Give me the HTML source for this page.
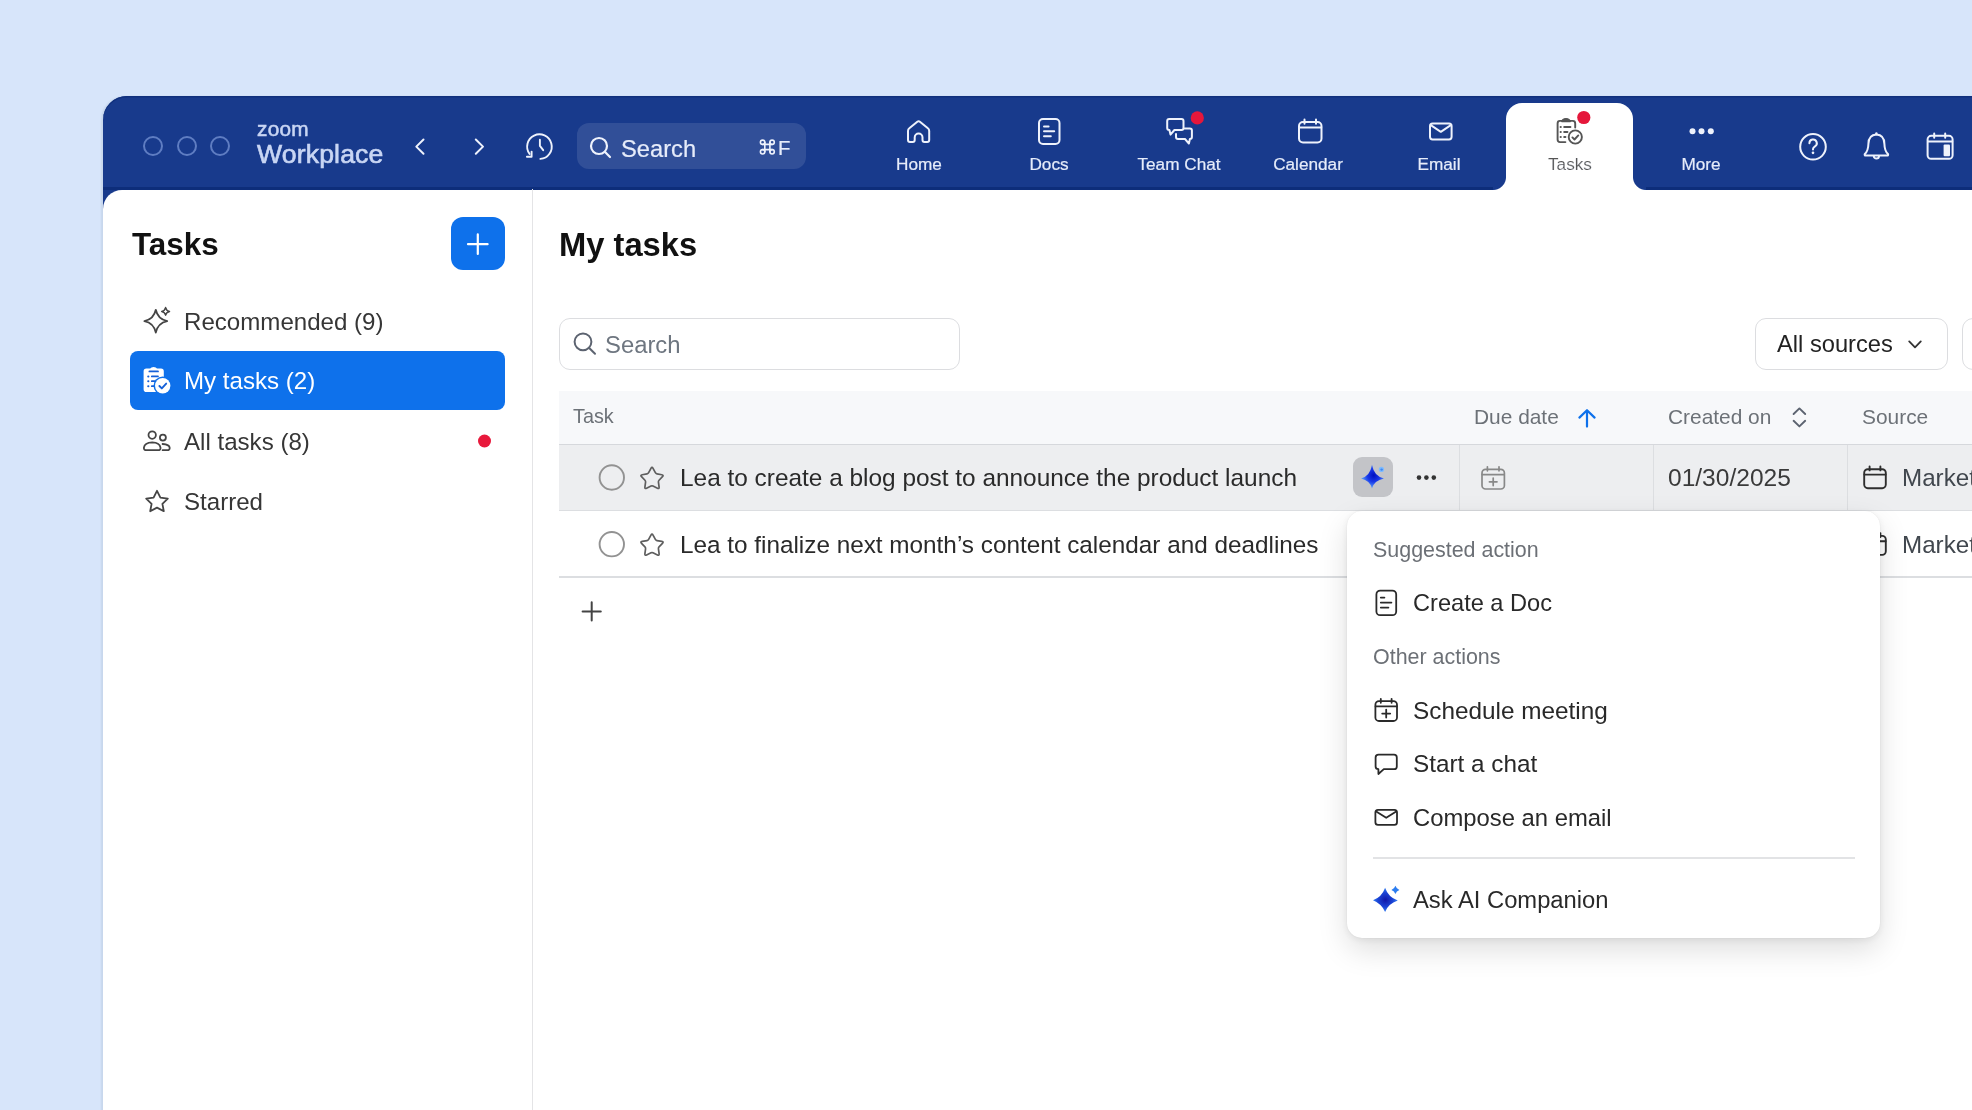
<!DOCTYPE html>
<html><head><meta charset="utf-8">
<style>
*{box-sizing:border-box;margin:0;padding:0}
html,body{width:1972px;height:1110px;overflow:hidden}
body{position:relative;background:#D7E5FA;font-family:"Liberation Sans",sans-serif;-webkit-font-smoothing:antialiased;}
.a{position:absolute}
.t{position:absolute;white-space:nowrap;line-height:normal;will-change:transform}
svg{position:absolute;overflow:visible}
#hdr{left:103px;top:96px;width:1900px;height:1030px;background:#183A8C;border-top-left-radius:24px;box-shadow:inset 0 1.5px 0 #10307D,-1.5px 0 1.5px rgba(70,95,130,0.10)}
#hline{left:103px;top:187px;width:1900px;height:3px;background:#0D2D7A}
#panel{left:103px;top:190px;width:1900px;height:930px;background:#fff;border-top-left-radius:19px;}
#tab{left:1506px;top:103px;width:127px;height:88px;background:#fff;border-radius:16px 16px 0 0}
.flare{width:13px;height:13px;top:177px}
#divider{left:532px;top:189px;width:1px;height:921px;background:#E4E4E6}
.tl{width:20px;height:20px;border:2px solid #5F7DC2;border-radius:50%;top:136px}
.nav{color:#E6ECFA;font-size:17.2px;-webkit-text-stroke:0.2px #E6ECFA}
.side{left:183.8px;font-size:24.1px;color:#363636}
.th{top:404.8px;font-size:20.5px;color:#6C7177}
.row{left:679.5px;font-size:24.2px;color:#2A2A2A}
.pl{font-size:21.45px;color:#6C7076}
.pi{left:1413px;font-size:23.7px;color:#292929}
</style></head><body>
<div class="a" id="hdr"></div>
<div class="a" id="hline"></div>
<div class="a" id="panel"></div>
<div class="a" id="tab"></div>
<div class="a flare" style="left:1493px;background:radial-gradient(circle at 0 0,#183A8C 12.5px,#fff 13.5px)"></div>
<div class="a flare" style="left:1633px;background:radial-gradient(circle at 13px 0,#183A8C 12.5px,#fff 13.5px)"></div>
<div class="a" id="divider"></div>


<!-- SIDEBAR -->
<div class="t" style="left:131.5px;top:226.9px;font-size:31.4px;font-weight:bold;color:#111">Tasks</div>
<div class="a" style="left:451px;top:216.5px;width:54px;height:53.5px;border-radius:12px;background:#0E71EB"></div>
<svg class="a" style="left:0;top:0" width="1972" height="1110" fill="none" stroke="#fff" stroke-width="2.2" stroke-linecap="round"><path d="M468,244.2 H487.6 M477.8,234.4 V254"/></svg>
<div class="a" style="left:130.4px;top:350.7px;width:374.6px;height:59.6px;border-radius:8px;background:#0E71EB"></div>
<div class="t side" style="top:307.5px">Recommended (9)</div>
<div class="t side" style="top:367.2px;color:#fff">My tasks (2)</div>
<div class="t side" style="top:428.2px">All tasks (8)</div>
<div class="t side" style="top:487.9px">Starred</div>
<svg class="a" style="left:0;top:0" width="1972" height="1110"><circle cx="484.5" cy="441" r="6.5" fill="#E8193C"/></svg>
<svg class="a" style="left:0;top:0" width="1972" height="1110" fill="none" stroke="#454545" stroke-width="1.8" stroke-linecap="round" stroke-linejoin="round">
 <!-- sparkle -->
 <path d="M155.8,309.8 Q157.8,319.2 167.2,321.1 Q157.8,323 155.8,332.6 Q153.8,323 144.4,321.1 Q153.8,319.2 155.8,309.8 Z"/>
 <path d="M165.6,307.6 Q166.3,310.7 169.5,311.4 Q166.3,312.1 165.6,315.2 Q164.9,312.1 161.7,311.4 Q164.9,310.7 165.6,307.6 Z" stroke-width="1.5"/>
 <!-- people -->
 <circle cx="152.2" cy="435.1" r="3.7"/>
 <path d="M146.6,450.2 H158 Q160.8,450.2 160.5,447.6 Q159.8,442.5 152.2,442.3 Q144.6,442.5 143.9,447.6 Q143.6,450.2 146.6,450.2 Z"/>
 <circle cx="162.9" cy="437.6" r="3"/>
 <path d="M162.6,444 Q169.4,444.4 169.7,447.8 Q169.8,450.2 167.2,450.2 H162.6"/>
 <!-- star -->
 <path d="M157,490.8 L160.4,497.6 L167.8,498.6 L162.4,503.8 L163.8,511.2 L157,507.6 L150.2,511.2 L151.6,503.8 L146.2,498.6 L153.6,497.6 Z"/>
</svg>
<!-- my tasks icon (white filled) -->
<svg class="a" style="left:0;top:0" width="1972" height="1110">
 <path d="M143.6,371.4 Q143.6,368.6 146.4,368.6 H150.2 Q151,367 153.6,367 Q156.2,367 157,368.6 H161 Q163.8,368.6 163.8,371.4 V389.2 Q163.8,392 161,392 H146.4 Q143.6,392 143.6,389.2 Z" fill="#fff"/>
 <path d="M149.4,371.4 H158" stroke="#1560D8" stroke-width="1.8" stroke-linecap="round"/>
 <path d="M148.2,376.4 H148.4 M148.2,381.2 H148.4 M148.2,386.2 H148.4" stroke="#1560D8" stroke-width="2" stroke-linecap="round"/>
 <path d="M151.8,376.4 H158 M151.8,381.2 H156 M151.8,386.2 H154" stroke="#1560D8" stroke-width="1.7" stroke-linecap="round"/>
 <circle cx="162.7" cy="385.8" r="9.2" fill="#0E71EB"/>
 <circle cx="162.7" cy="385.8" r="7.7" fill="#fff"/>
 <path d="M159.4,386 L161.8,388.4 L166.2,383.6" fill="none" stroke="#1560D8" stroke-width="1.9" stroke-linecap="round" stroke-linejoin="round"/>
</svg>

<!-- MAIN -->
<div class="t" style="left:559px;top:225.8px;font-size:32.7px;font-weight:bold;color:#111">My tasks</div>
<div class="a" style="left:559px;top:318px;width:400.5px;height:52px;border:1.5px solid #DCDDE0;border-radius:11px"></div>
<svg class="a" style="left:0;top:0" width="1972" height="1110" fill="none" stroke="#5C6370" stroke-width="2" stroke-linecap="round"><circle cx="583" cy="341.8" r="8.4"/><path d="M589.2,348 L595,353.8"/></svg>
<div class="t" style="left:605px;top:331.3px;font-size:23.85px;color:#6E7680">Search</div>
<div class="a" style="left:1755px;top:317.5px;width:192.5px;height:52.5px;border:1.5px solid #DCDDE0;border-radius:11px"></div>
<div class="a" style="left:1962px;top:317.5px;width:192.5px;height:52.5px;border:1.5px solid #DCDDE0;border-radius:11px"></div>
<div class="t" style="left:1776.5px;top:331.2px;font-size:23.7px;color:#222">All sources</div>
<svg class="a" style="left:0;top:0" width="1972" height="1110" fill="none" stroke="#333" stroke-width="1.8" stroke-linecap="round" stroke-linejoin="round"><path d="M1909.2,341.4 L1915,347.4 L1920.8,341.4"/></svg>

<!-- table -->
<div class="a" style="left:559px;top:390.5px;width:1500px;height:54.5px;background:#F7F8FA;border-bottom:1.5px solid #D6D8DC"></div>
<div class="a" style="left:559px;top:445px;width:1500px;height:65.5px;background:#EDEEF0;border-bottom:1.2px solid #DCDEE1"></div>
<div class="a" style="left:559px;top:576.4px;width:1500px;height:1.4px;background:#DCDEE1"></div>
<div class="a" style="left:1458.8px;top:445px;width:1px;height:65px;background:#DCDEE1"></div>
<div class="a" style="left:1652.8px;top:445px;width:1px;height:65px;background:#DCDEE1"></div>
<div class="a" style="left:1846.8px;top:445px;width:1px;height:65px;background:#DCDEE1"></div>
<div class="t th" style="left:573.2px;font-size:19.8px;top:405.4px">Task</div>
<div class="t th" style="left:1473.5px;font-size:20.9px">Due date</div>
<div class="t th" style="left:1668px;font-size:20.9px">Created on</div>
<div class="t th" style="left:1861.5px;font-size:20.9px">Source</div>
<svg class="a" style="left:0;top:0" width="1972" height="1110" fill="none" stroke="#0E71EB" stroke-width="2.2" stroke-linecap="round" stroke-linejoin="round"><path d="M1587,410.5 V426.6 M1579.4,417.6 L1587,410.2 L1594.6,417.6"/></svg>
<svg class="a" style="left:0;top:0" width="1972" height="1110" fill="none" stroke="#5C6370" stroke-width="1.9" stroke-linecap="round" stroke-linejoin="round"><path d="M1793.6,414 L1799.4,408.4 L1805.2,414 M1793.6,420.8 L1799.4,426.4 L1805.2,420.8"/></svg>

<svg class="a" style="left:0;top:0" width="1972" height="1110" fill="none" stroke="#929292" stroke-width="1.9" stroke-linecap="round" stroke-linejoin="round">
 <circle cx="611.8" cy="477.5" r="12.2"/>
 <circle cx="611.8" cy="544.2" r="12.2"/>
</svg>
<svg class="a" style="left:0;top:0" width="1972" height="1110" fill="none" stroke="#5E5E5E" stroke-width="1.7" stroke-linecap="round" stroke-linejoin="round">
 <path id="st1" d="M650.96,468.34 Q652.00,466.40 653.04,468.34 L655.36,472.69 Q655.88,473.66 656.96,473.85 L661.82,474.72 Q663.98,475.11 662.46,476.69 L659.04,480.25 Q658.28,481.04 658.43,482.13 L659.10,487.01 Q659.41,489.19 657.43,488.23 L652.99,486.08 Q652.00,485.60 651.01,486.08 L646.57,488.23 Q644.59,489.19 644.90,487.01 L645.57,482.13 Q645.72,481.04 644.96,480.25 L641.54,476.69 Q640.02,475.11 642.18,474.72 L647.04,473.85 Q648.12,473.66 648.64,472.69 Z"/>
 <path d="M650.96,535.04 Q652.00,533.10 653.04,535.04 L655.36,539.39 Q655.88,540.36 656.96,540.55 L661.82,541.42 Q663.98,541.81 662.46,543.39 L659.04,546.95 Q658.28,547.74 658.43,548.83 L659.10,553.71 Q659.41,555.89 657.43,554.93 L652.99,552.78 Q652.00,552.30 651.01,552.78 L646.57,554.93 Q644.59,555.89 644.90,553.71 L645.57,548.83 Q645.72,547.74 644.96,546.95 L641.54,543.39 Q640.02,541.81 642.18,541.42 L647.04,540.55 Q648.12,540.36 648.64,539.39 Z"/>
</svg>
<div class="t row" style="top:463.8px;font-size:24.4px">Lea to create a blog post to announce the product launch</div>
<div class="t row" style="top:530.7px;font-size:24.3px">Lea to finalize next month’s content calendar and deadlines</div>
<div class="a" style="left:1353px;top:457.4px;width:40px;height:40px;border-radius:9px;background:#C3C4C8"></div>
<svg class="a" style="left:0;top:0" width="1972" height="1110">
 <defs><radialGradient id="sg" cx="0.55" cy="0.45" r="0.6"><stop offset="0" stop-color="#0010C0"/><stop offset="0.45" stop-color="#1838E8"/><stop offset="1" stop-color="#6AB4FF"/></radialGradient>
 <radialGradient id="sg2" cx="0.5" cy="0.5" r="0.55"><stop offset="0" stop-color="#1016A8"/><stop offset="0.55" stop-color="#1B45D6"/><stop offset="1" stop-color="#3C8EF8"/></radialGradient></defs>
 <path d="M1372,464.8 Q1374,476.4 1384,478.4 Q1374,480.4 1372,488.4 Q1370,480.4 1361,478.4 Q1370,476.4 1372,464.8 Z" fill="url(#sg)"/>
 <circle cx="1381.4" cy="469.4" r="2.6" fill="#7DBBFF"/><circle cx="1381.6" cy="469.6" r="1.2" fill="#3F86F0"/>
 <circle cx="1419" cy="477.6" r="2.3" fill="#333"/>
 <circle cx="1426.4" cy="477.6" r="2.3" fill="#333"/>
 <circle cx="1433.8" cy="477.6" r="2.3" fill="#333"/>
</svg>
<svg class="a" style="left:0;top:0" width="1972" height="1110" fill="none" stroke="#888" stroke-width="1.7" stroke-linecap="round" stroke-linejoin="round">
 <rect x="1482" y="469.4" width="22.4" height="19.6" rx="3.6"/>
 <path d="M1482.2,474.6 H1504.2 M1487.4,466.8 V470.8 M1499,466.8 V470.8 M1493.2,478 V485.6 M1489.4,481.8 H1497"/>
</svg>
<div class="t row" style="left:1668.3px;top:464.4px;font-size:24.55px;color:#3A3A3A">01/30/2025</div>
<svg class="a" style="left:0;top:0" width="1972" height="1110" fill="none" stroke="#2E2E2E" stroke-width="1.9" stroke-linecap="round" stroke-linejoin="round">
 <rect x="1864.2" y="469.2" width="21.6" height="19" rx="3.6"/>
 <path d="M1864.4,474.6 H1885.6 M1869.6,466.4 V470.4 M1880.4,466.4 V470.4"/>
 <rect x="1864.2" y="535.9" width="21.6" height="19" rx="3.6"/>
 <path d="M1864.4,541.3 H1885.6 M1869.6,533.1 V537.1 M1880.4,533.1 V537.1"/>
</svg>
<div class="t row" style="left:1901.5px;top:464.3px;color:#41474E">Marketing</div>
<div class="t row" style="left:1901.5px;top:531.2px;color:#41474E">Marketing</div>
<svg class="a" style="left:0;top:0" width="1972" height="1110" fill="none" stroke="#444" stroke-width="2" stroke-linecap="round"><path d="M582.6,611.4 H600.8 M591.7,602.3 V620.5"/></svg>

<!-- POPUP -->
<div class="a" style="left:1346.5px;top:510.5px;width:533.8px;height:427.6px;border-radius:15px;background:#fff;box-shadow:0 12px 30px rgba(0,0,0,0.13),0 2px 8px rgba(0,0,0,0.07),0 0 1.5px rgba(0,0,0,0.10)"></div>
<div class="t pl" style="left:1373.2px;top:537.6px">Suggested action</div>
<div class="t pi" style="top:589.8px;font-size:23.6px">Create a Doc</div>
<div class="t pl" style="left:1373.2px;top:644.8px">Other actions</div>
<div class="t pi" style="top:696.8px;font-size:24.33px">Schedule meeting</div>
<div class="t pi" style="top:750.4px;font-size:24.3px">Start a chat</div>
<div class="t pi" style="top:803.9px;font-size:23.83px">Compose an email</div>
<div class="a" style="left:1373px;top:857.4px;width:482px;height:1.5px;background:#E2E3E5"></div>
<div class="t pi" style="top:885.9px;font-size:23.78px">Ask AI Companion</div>
<svg class="a" style="left:0;top:0" width="1972" height="1110" fill="none" stroke="#2A2A2A" stroke-width="1.8" stroke-linecap="round" stroke-linejoin="round">
 <rect x="1376.4" y="590.6" width="19.8" height="24.6" rx="3.8"/>
 <path d="M1380.8,597.6 H1384.4 M1380.8,602.6 H1391.4 M1380.8,607.6 H1388.4"/>
 <rect x="1375.4" y="701.2" width="21.6" height="19.8" rx="3.6"/>
 <path d="M1375.6,706.4 H1396.8 M1380.8,698.8 V702.8 M1391.6,698.8 V702.8 M1386.2,709.6 V717.6 M1382.2,713.6 H1390.2"/>
 <path d="M1378.6,754.6 H1394 Q1396.8,754.6 1396.8,757.4 V766.4 Q1396.8,769.2 1394,769.2 H1383.8 L1378.4,774 V769.2 Q1375.6,769 1375.6,766.4 V757.4 Q1375.6,754.6 1378.6,754.6 Z"/>
 <rect x="1375.4" y="809.8" width="21.6" height="15" rx="2.6"/>
 <path d="M1376.2,811.4 L1386.2,817.8 L1396.2,811.4"/>
</svg>
<svg class="a" style="left:0;top:0" width="1972" height="1110">
 <path d="M1385.1,887.8 Q1388.2,897.2 1397.8,900.6 Q1388.2,903.8 1385.1,912 Q1381.8,903.8 1373,900.2 Q1381.8,897.2 1385.1,887.8 Z" fill="url(#sg2)"/>
 <path d="M1395.4,885.8 Q1396.4,888.9 1399.4,889.9 Q1396.4,890.9 1395.4,894 Q1394.4,890.9 1391.4,889.9 Q1394.4,888.9 1395.4,885.8 Z" fill="#2C7DF0"/>
</svg>

<!-- traffic lights -->
<div class="a tl" style="left:143px"></div>
<div class="a tl" style="left:177px"></div>
<div class="a tl" style="left:210px"></div>

<!-- logo -->
<div class="t" style="left:256.8px;top:116.6px;font-size:20.8px;color:#C9D6F4;-webkit-text-stroke:0.55px #C9D6F4;letter-spacing:0.25px">zoom</div>
<div class="t" style="left:257px;top:138.8px;font-size:26.6px;color:#C9D6F4;-webkit-text-stroke:0.65px #C9D6F4;letter-spacing:0.15px">Workplace</div>


<!-- header icons -->
<svg class="a" style="left:0;top:0" width="1972" height="1110" fill="none" stroke="#EEF2FC" stroke-width="2" stroke-linecap="round" stroke-linejoin="round">
 <path d="M423.5,139.5 L416.3,146.6 L423.5,153.8"/>
 <path d="M475.8,139.5 L483,146.6 L475.8,153.8"/>
 <path d="M529.6,154 A12.3,12.3 0 1 1 540.4,158.9" stroke-width="1.9"/>
 <path d="M526.9,156.8 L531.6,156.8 L531.6,151.6" stroke-width="1.9"/>
 <path d="M539.9,139.8 L539.9,145.9 L543.2,150.2" stroke-width="1.9"/>
 <circle cx="599" cy="146" r="8" stroke-width="2.2"/>
 <path d="M604.8,151.8 L610,157" stroke-width="2.2"/>
 <!-- home -->
 <path d="M908,131 Q908,129.3 909.3,128.3 L917.3,121.8 Q918.6,120.8 919.9,121.8 L927.9,128.3 Q929.2,129.3 929.2,131 L929.2,140 Q929.2,142 927.2,142 L924.5,142 Q922.5,142 922.5,140 L922.5,137.5 A3.9,3.9 0 0 0 914.7,137.5 L914.7,140 Q914.7,142 912.7,142 L910,142 Q908,142 908,140 Z"/>
 <!-- docs -->
 <rect x="1039" y="119" width="20.5" height="25" rx="4"/>
 <path d="M1044,126.4 H1048.6 M1044,131.2 H1054.2 M1044,136.2 H1050.8"/>
 <!-- chat -->
 <path d="M1169.4,130 H1169.2 Q1167.2,130 1167.2,128 V121 Q1167.2,119.1 1169.2,119.1 H1181.5 Q1183.5,119.1 1183.5,121 V128 Q1183.5,130 1181.5,130 H1174.4 L1170.5,134.6 Z"/>
 <path d="M1184.6,128.6 H1189.9 Q1191.9,128.6 1191.9,130.6 V137 Q1191.9,139 1189.9,139 L1188.9,143.6 L1185,139 H1178 Q1176,139 1176,137 V134"/>
 <!-- calendar -->
 <rect x="1299" y="122" width="22.5" height="20.5" rx="4"/>
 <path d="M1299.3,127.6 H1321.2 M1304.5,119.6 V123.8 M1316,119.6 V123.8"/>
 <!-- email -->
 <rect x="1430" y="123.6" width="21.6" height="15.8" rx="2.6"/>
 <path d="M1430.8,125.2 L1440.8,131.8 L1450.8,125.2"/>
 <!-- help -->
 <circle cx="1813" cy="146.8" r="12.8"/>
 <path d="M1809.4,143.2 A3.7,3.7 0 1 1 1815,146.3 Q1813,147.5 1813,149 V149.6" stroke-width="2"/>
 <!-- bell -->
 <path d="M1876.4,134.6 Q1868.6,135 1868.4,144 Q1868.2,151 1864.8,154 Q1864.2,155.4 1865.8,155.6 H1887 Q1888.6,155.4 1888,154 Q1884.6,151 1884.4,144 Q1884.2,135 1876.4,134.6 Z"/>
 <path d="M1873.8,156 A2.6,2.6 0 0 0 1879,156"/>
 <!-- calendar right -->
 <rect x="1927.6" y="135.8" width="25" height="23" rx="3.6"/>
 <path d="M1928,141.4 H1952.2 M1934.2,133.4 V137.8 M1945.2,133.4 V137.8"/>
</svg>
<svg class="a" style="left:0;top:0" width="1972" height="1110">
 <circle cx="1813" cy="152.8" r="1.35" fill="#EEF2FC"/>
 <circle cx="1876.4" cy="133.4" r="1.2" fill="#EEF2FC"/>
 <rect x="1943.6" y="144.6" width="6.4" height="11.6" rx="1" fill="#EEF2FC"/>
 <circle cx="1692.5" cy="131.2" r="3" fill="#EEF2FC"/>
 <circle cx="1701.5" cy="131.2" r="3" fill="#EEF2FC"/>
 <circle cx="1710.8" cy="131.2" r="3" fill="#EEF2FC"/>
 <circle cx="1197.3" cy="117.9" r="6.6" fill="#E5173B"/>
 <circle cx="1583.8" cy="117.5" r="6.6" fill="#E5173B"/>
</svg>
<!-- tasks icon (grey) -->
<svg class="a" style="left:0;top:0" width="1972" height="1110" fill="none" stroke="#555" stroke-width="1.9" stroke-linecap="round" stroke-linejoin="round">
 <path d="M1575.2,127.6 V123.4 Q1575.2,120.9 1572.8,120.9 H1559.8 Q1557.6,120.9 1557.6,123.4 V139.6 Q1557.6,142.1 1560,142.1 H1565.4"/>
 <path d="M1561.8,121.6 Q1562.4,118.6 1566,118.6 Q1569.6,118.6 1570.2,121.6 Z" fill="#555" stroke-width="1.4"/>
 <path d="M1560.6,127.1 H1560.8 M1564.2,127.1 H1570.4 M1560.6,132 H1560.8 M1564.2,132 H1567.4 M1560.6,137 H1560.8 M1564.2,137 H1565.4" stroke-width="2"/>
 <circle cx="1575.3" cy="137" r="6.6"/>
 <path d="M1572.4,137.4 L1574.5,139.5 L1578.3,135.4"/>
</svg>
<!-- header search -->
<div class="a" style="left:577px;top:123px;width:229px;height:46px;border-radius:12px;background:rgba(255,255,255,0.11)"></div>

<div class="t nav" style="left:620.5px;top:135.8px;font-size:23.7px;">Search</div>
<svg class="a" style="left:0;top:0" width="1972" height="1110" fill="none" stroke="#EEF2FC" stroke-width="1.6" stroke-linecap="round" stroke-linejoin="round">
 <path d="M762.6,144.4 H772.2 M762.6,149.6 H772.2 M764.8,142.3 V151.8 M769.9,142.3 V151.8"/><circle cx="762.6" cy="142.3" r="2.2"/><circle cx="772.1" cy="142.3" r="2.2"/><circle cx="762.6" cy="151.8" r="2.2"/><circle cx="772.1" cy="151.8" r="2.2"/>
</svg>
<div class="t nav" style="left:778px;top:136.8px;font-size:20.3px;">F</div>
<div class="t nav" style="left:858.5px;top:154.4px;width:120px;text-align:center">Home</div>
<div class="t nav" style="left:988.5px;top:154.4px;width:120px;text-align:center">Docs</div>
<div class="t nav" style="left:1118.5px;top:154.4px;width:120px;text-align:center">Team Chat</div>
<div class="t nav" style="left:1248px;top:154.4px;width:120px;text-align:center">Calendar</div>
<div class="t nav" style="left:1379px;top:154.4px;width:120px;text-align:center">Email</div>
<div class="t nav" style="left:1510px;top:154.4px;width:120px;text-align:center;color:#555">Tasks</div>
<div class="t nav" style="left:1640.5px;top:154.4px;width:120px;text-align:center">More</div>
</body></html>
